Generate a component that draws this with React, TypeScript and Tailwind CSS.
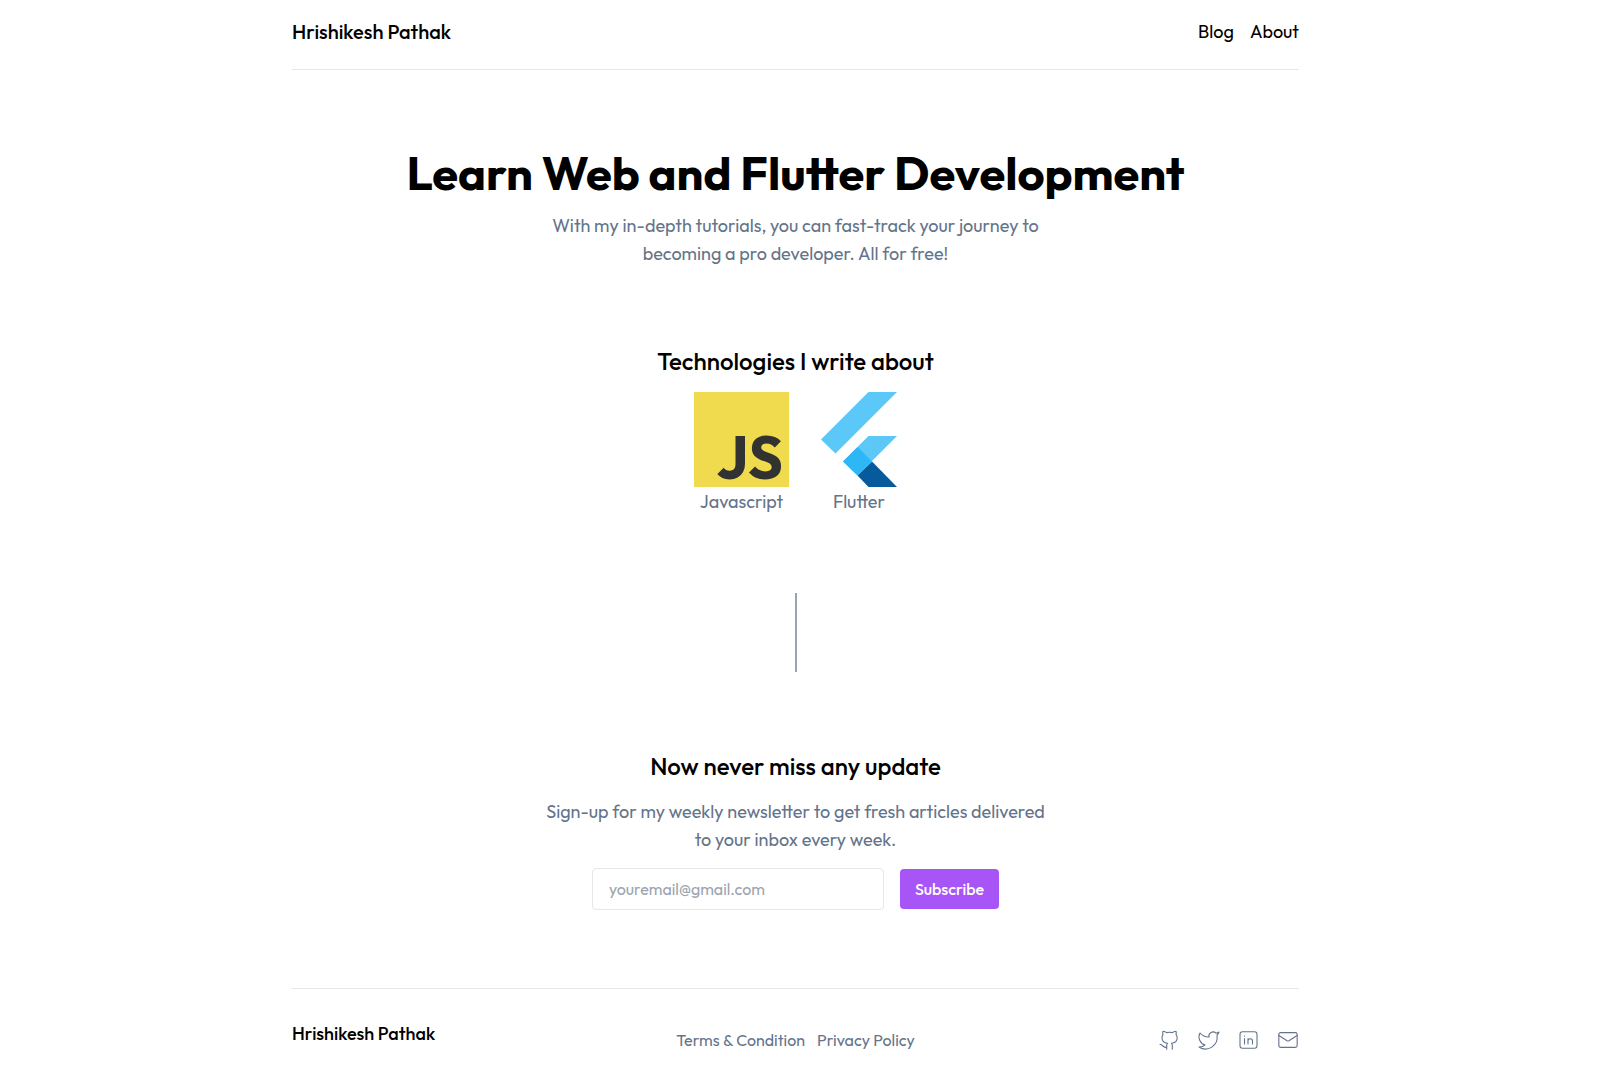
import React from "react";
import { Twitter, Mail } from "lucide-react";

function JavascriptLogo() {
  return (
    <div
      className="flex h-[95px] w-[95px] items-end justify-end bg-[#f0db4f] pr-[6px] text-[60px] leading-[60px] font-bold text-[#323330]"
      role="img"
      aria-label="Javascript logo"
    >
      JS
    </div>
  );
}

function FlutterLogo() {
  return (
    <svg viewBox="0 0 76 95" className="h-[95px] w-[76px]" role="img" aria-label="Flutter logo">
      <path d="M47.5 0H76L14.5 61.5L0 47.5Z" fill="#5cc8f8" />
      <path d="M47.5 44H76L36.5 83.5L22 69.5Z" fill="#5cc8f8" />
      <path d="M36.5 83.5L51 69.5L76 95H47.5Z" fill="#075b9d" />
      <path d="M22 69.5L36.5 55L51 69.5L36.5 83.5Z" fill="#2db7f6" />
    </svg>
  );
}

function LineIcon({ d, children }: { d: string; children?: React.ReactNode }) {
  return (
    <svg
      viewBox="0 0 20 20"
      className="h-5 w-5"
      fill="none"
      stroke="currentColor"
      strokeWidth="1.1"
      strokeLinecap="round"
      strokeLinejoin="round"
      aria-hidden="true"
    >
      {children}
      <path d={d} />
    </svg>
  );
}

const socials = [
  {
    label: "GitHub",
    icon: (
      <LineIcon d="M7.7 19.3V15.5C7.7 14.5 8 13.8 8.5 13.3C5.5 13 3 11.5 3 7.8C3 6.5 3.3 5.5 4 4.7C3.6 3.6 3.6 2.4 4 1.3C5.5 1.5 6.8 2 7.8 2.6C9.6 2.2 11.4 2.2 13.2 2.6C14.2 2 15.5 1.5 17 1.3C17.4 2.4 17.4 3.6 17 4.7C17.8 5.5 18.2 6.5 18.2 7.8C18.2 11.5 15.5 13 12.5 13.3C13 13.8 13.3 14.5 13.3 15.5V19.3M7.7 17.3C4.5 18 4 15 1 14.3" />
    ),
  },
  { label: "Twitter", icon: <Twitter className="h-6 w-6" strokeWidth={1.1} /> },
  {
    label: "LinkedIn",
    icon: (
      <LineIcon d="M5.5 8.5V14M5.5 6V6.2M9 14V8.5M9 10.7C9.5 8 13.5 8 13.5 11V14">
        <rect x="1" y="1.8" width="17" height="16.4" rx="2.5" />
      </LineIcon>
    ),
  },
  { label: "Email", icon: <Mail className="h-[22px] w-[22px]" strokeWidth={1.2} /> },
];

export default function App() {
  return (
    <div className="bg-white pr-[9px] font-['Outfit','Lato',sans-serif] text-black">
      <div className="mx-auto max-w-[1007px]">
        <header className="flex items-center justify-between border-b border-gray-200 pt-[18px] pb-[23px]">
          <a href="#" className="text-xl font-medium">
            Hrishikesh Pathak
          </a>
          <nav className="flex gap-4 text-lg">
            <a href="#blog">Blog</a>
            <a href="#about">About</a>
          </nav>
        </header>

        <main className="flex flex-col items-center text-center">
          <section className="flex flex-col items-center pt-[79px]">
            <h1 className="text-[47px] leading-[48px] font-bold">Learn Web and Flutter Development</h1>
            <p className="mt-[15px] max-w-[500px] text-lg text-[#64748b]">
              With my in-depth tutorials, you can fast-track your journey to becoming a pro developer. All for free!
            </p>
          </section>

          <section className="flex flex-col items-center pt-[77px]">
            <h2 className="text-2xl font-medium">Technologies I write about</h2>
            <div className="mt-[15px] flex gap-8 text-lg text-[#64748b]">
              <figure className="flex flex-col items-center gap-px">
                <JavascriptLogo />
                <figcaption>Javascript</figcaption>
              </figure>
              <figure className="flex flex-col items-center gap-px">
                <FlutterLogo />
                <figcaption>Flutter</figcaption>
              </figure>
            </div>
          </section>

          <div className="mt-[77px] h-[79px] border-l-2 border-[#9aa4b6]" />

          <section className="flex flex-col items-center pt-[78px]">
            <h2 className="text-2xl font-medium">Now never miss any update</h2>
            <p className="mt-4 max-w-[510px] text-lg text-[#64748b]">
              Sign-up for my weekly newsletter to get fresh articles delivered to your inbox every week.
            </p>
            <form className="mt-[14px] flex items-center gap-4" onSubmit={(e) => e.preventDefault()}>
              <input
                type="email"
                aria-label="Email address"
                placeholder="youremail@gmail.com"
                className="h-[42px] w-[292px] rounded border border-[#e5e7eb] px-4 text-base placeholder:text-[#9ca3af]"
              />
              <button type="submit" className="h-10 rounded bg-[#a855f7] px-[15px] text-base font-medium text-white">
                Subscribe
              </button>
            </form>
          </section>
        </main>

        <footer className="mt-[78px] grid grid-cols-3 items-center border-t border-gray-200 pt-[31px] pb-4">
          <a href="#" className="self-start text-lg font-medium">
            Hrishikesh Pathak
          </a>
          <div className="flex justify-center gap-3 pt-2 text-base text-[#64748b]">
            <a href="#terms">Terms &amp; Condition</a>
            <a href="#privacy">Privacy Policy</a>
          </div>
          <div className="flex items-center justify-end gap-[18px] pt-[7px] text-[#64748b]">
            {socials.map((s) => (
              <a key={s.label} href="#social" aria-label={s.label}>
                {s.icon}
              </a>
            ))}
          </div>
        </footer>
      </div>
    </div>
  );
}
